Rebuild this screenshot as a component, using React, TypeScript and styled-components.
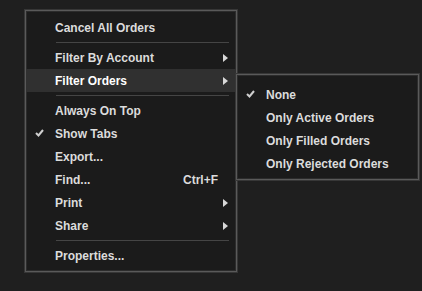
import React from "react";
import styled, { createGlobalStyle } from "styled-components";

const Global = createGlobalStyle`
  html, body {
    margin: 0;
    background: #1f1f1f;
    font-family: "Liberation Sans", Arial, sans-serif;
  }
`;

const Page = styled.div`
  width: 422px;
  height: 291px;
  padding: 10px 0 0 25px;
  box-sizing: border-box;
`;

const MenuPanel = styled.div<{ width: number }>`
  position: relative;
  width: ${(p) => p.width}px;
  box-sizing: border-box;
  background: #1b1b1b;
  border: 1px solid #5a5a5a;
  box-shadow: 0 0 0 1px #373737, inset 0 0 0 1px #2c2c2c;
  display: flex;
  flex-direction: column;
`;

const MainMenu = styled(MenuPanel)`
  padding: 5px 0 4px;
`;

const SubMenu = styled(MenuPanel)`
  position: absolute;
  top: 5px;
  left: 100%;
  padding: 8px 0 4px;
  z-index: 2;
`;

const Row = styled.div<{ active?: boolean }>`
  position: relative;
  height: 23px;
  display: flex;
  align-items: center;
  padding: 0 8px 0 29px;
  font-size: 12px;
  font-weight: bold;
  color: ${(p) => (p.active ? "#ffffff" : "#dcdcdc")};
  background: ${(p) => (p.active ? "#303030" : "transparent")};
  white-space: nowrap;
`;

const Label = styled.span`
  flex: 1;
`;

const Shortcut = styled.span`
  margin-right: 10px;
`;

const Check = styled.svg`
  position: absolute;
  left: 9px;
  top: 7px;
`;

const Arrow = styled.span`
  width: 0;
  height: 0;
  border-top: 4px solid transparent;
  border-bottom: 4px solid transparent;
  border-left: 5px solid #d8d8d8;
`;

const Separator = styled.div`
  height: 1px;
  margin: 3px 7px 3px 30px;
  background: #454545;
`;

const CheckMark = () => (
  <Check width="9" height="8" viewBox="0 0 9 8">
    <polyline points="1,4 3.5,6.5 8,1" fill="none" stroke="#cfcfcf" strokeWidth="2" />
  </Check>
);

type Item = { label: string; checked?: boolean; sub?: boolean; shortcut?: string };

const Entry = ({ item, active, children }: { item: Item; active?: boolean; children?: React.ReactNode }) => (
  <Row active={active}>
    {item.checked && <CheckMark />}
    <Label>{item.label}</Label>
    {item.shortcut && <Shortcut>{item.shortcut}</Shortcut>}
    {item.sub && <Arrow />}
    {children}
  </Row>
);

const filterItems: Item[] = [
  { label: "None", checked: true },
  { label: "Only Active Orders" },
  { label: "Only Filled Orders" },
  { label: "Only Rejected Orders" },
];

const middleItems: Item[] = [
  { label: "Always On Top" },
  { label: "Show Tabs", checked: true },
  { label: "Export..." },
  { label: "Find...", shortcut: "Ctrl+F" },
  { label: "Print", sub: true },
  { label: "Share", sub: true },
];

export default function App() {
  return (
    <Page>
      <Global />
      <MainMenu width={212}>
        <Entry item={{ label: "Cancel All Orders" }} />
        <Separator />
        <Entry item={{ label: "Filter By Account", sub: true }} />
        <Entry item={{ label: "Filter Orders", sub: true }} active>
          <SubMenu width={183}>
            {filterItems.map((it) => (
              <Entry key={it.label} item={it} />
            ))}
          </SubMenu>
        </Entry>
        <Separator />
        {middleItems.map((it) => (
          <Entry key={it.label} item={it} />
        ))}
        <Separator />
        <Entry item={{ label: "Properties..." }} />
      </MainMenu>
    </Page>
  );
}
